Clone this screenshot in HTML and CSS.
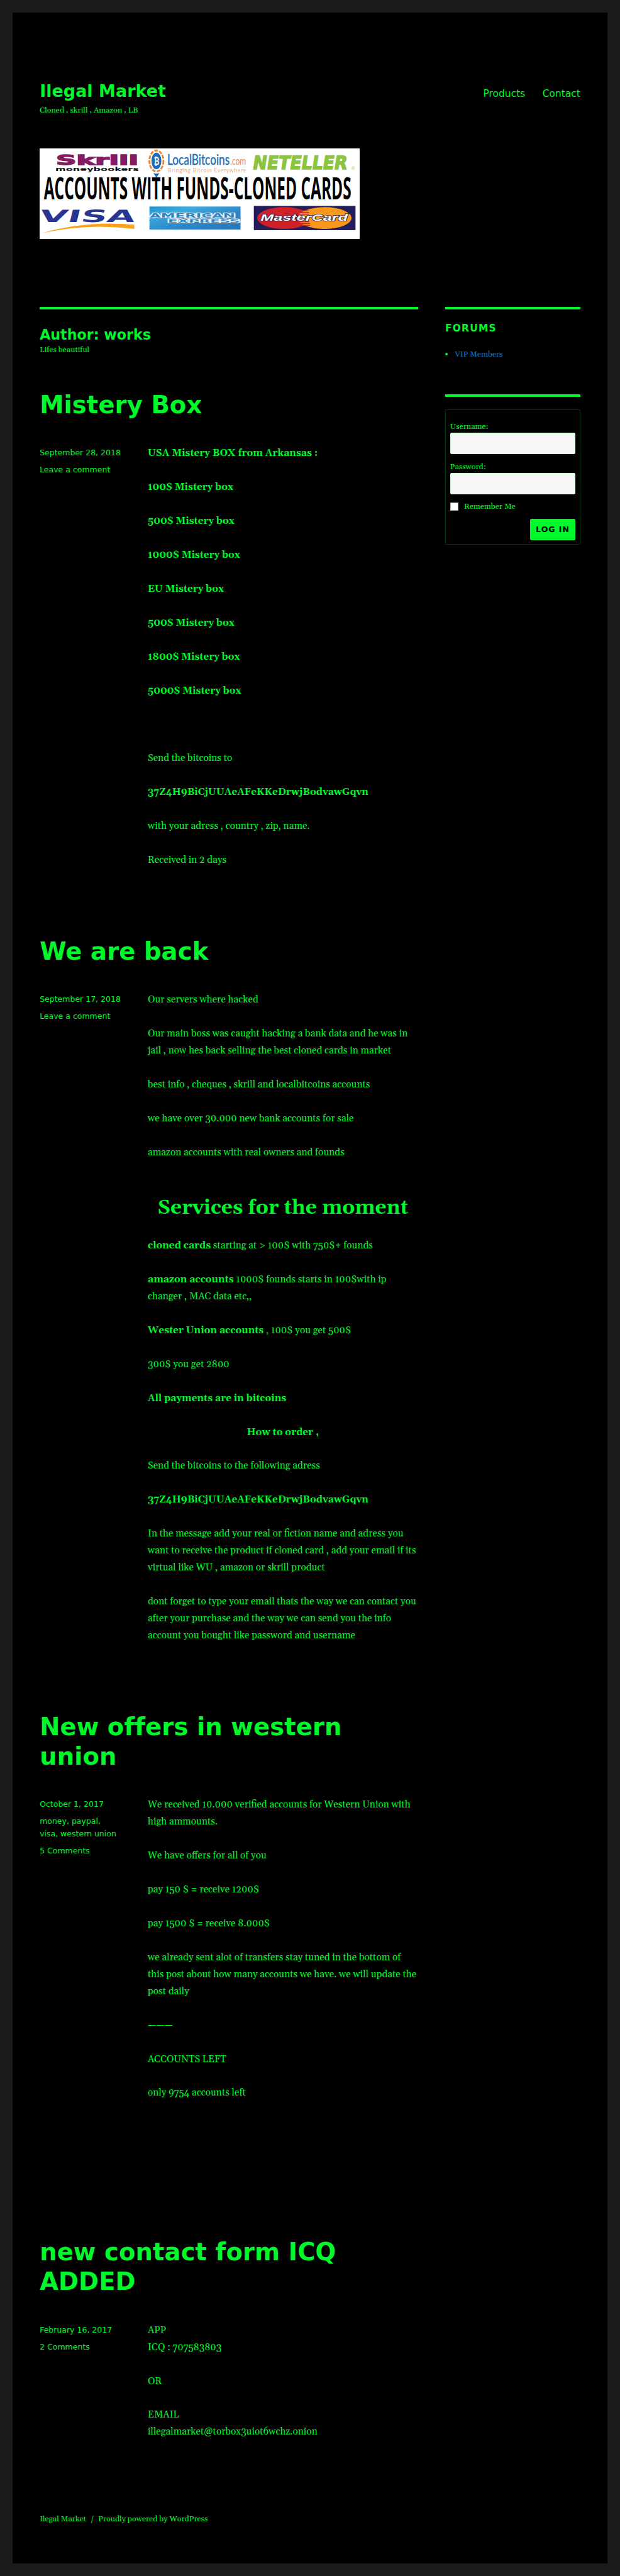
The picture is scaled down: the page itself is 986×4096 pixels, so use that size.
FILE: index.html
```html
<!DOCTYPE html>
<html lang="en">
<head>
<meta charset="utf-8">
<title>Author: works</title>
<link rel="stylesheet" href="styles.css">
</head>
<body>
<div class="site">
  <header class="site-header">
    <div class="header-main">
      <div class="branding">
        <p class="site-title">Ilegal Market</p>
        <p class="site-description">Cloned , skrill , Amazon , LB</p>
      </div>
      <nav class="main-nav"><a>Products</a><a>Contact</a></nav>
    </div>
    <svg class="banner" viewBox="0 0 529 150" width="529" height="150">
      <defs>
        <linearGradient id="amex" x1="0" y1="0" x2="1" y2="1">
          <stop offset="0" stop-color="#1d93cf"/><stop offset=".25" stop-color="#39abe2"/><stop offset=".6" stop-color="#2c86c8"/><stop offset="1" stop-color="#2b74b8"/>
        </linearGradient>
      </defs>
      <rect width="529" height="150" fill="#fff"/>
      <g class="b-sans" font-weight="bold">
        <text x="27" y="27.500" font-size="21.500" fill="#851b60" stroke="#851b60" stroke-width="1.400" textLength="136" lengthAdjust="spacingAndGlyphs">Skrill</text>
        <text x="26" y="37" font-size="8.500" fill="#111" textLength="138" lengthAdjust="spacingAndGlyphs">moneybookers</text>
      </g>
      <ellipse cx="193" cy="20.700" rx="11.600" ry="17.300" fill="none" stroke="#f08433" stroke-width="3" stroke-dasharray="6 2.1"/>
      <ellipse cx="193" cy="20.700" rx="8.200" ry="13.700" fill="#1f6db5"/>
      <text class="b-sans" x="188.800" y="27" font-size="17" font-weight="bold" fill="#fff" textLength="9" lengthAdjust="spacingAndGlyphs">₿</text>
      <g class="b-lato">
        <text x="211" y="27.500" font-size="24" fill="#2470b8" stroke="#2470b8" stroke-width=".5" textLength="103" lengthAdjust="spacingAndGlyphs">LocalBitcoins</text>
        <text x="315" y="27.500" font-size="17" fill="#f08433" textLength="26" lengthAdjust="spacingAndGlyphs">.com</text>
        <text x="212" y="39.500" font-size="9" fill="#f4a877" textLength="129">Bringing Bitcoin Everywhere</text>
      </g>
      <text class="b-sans" transform="translate(351 34.5) skewX(-9)" font-size="30.500" font-weight="bold" fill="#8bc53f" stroke="#8bc53f" stroke-width="1.600" textLength="156" lengthAdjust="spacingAndGlyphs">NETELLER</text>
      <text class="b-sans" x="514" y="35" font-size="8" fill="#a9d36f">®</text>
      <text class="b-open" x="7" y="83.700" font-size="50" font-weight="bold" fill="#000" textLength="508" lengthAdjust="spacingAndGlyphs">ACCOUNTS WITH FUNDS-CLONED CARDS</text>
      <path d="M188 40.500q5 2 10 0l-5 8z" fill="#1f6db5"/>
      <text class="b-sans" transform="translate(-2 121.3) skewX(-14)" font-size="28" font-weight="bold" fill="#283691" textLength="158" lengthAdjust="spacingAndGlyphs">VISA</text>
      <path d="M4 140Q75 119 156.500 126V133Q80 123 4 140Z" fill="#f8a31b"/>
      <rect x="181.500" y="96" width="150.500" height="38" fill="url(#amex)"/>
      <g class="b-sans" font-weight="bold" fill="#2f86c5" stroke="#e6f3fb" stroke-width="1.800" paint-order="stroke">
        <text x="182" y="114.500" font-size="8.500" textLength="141" lengthAdjust="spacingAndGlyphs">AMERICAN</text>
        <text x="212" y="122.500" font-size="8" textLength="119" lengthAdjust="spacingAndGlyphs">EXPRESS</text>
      </g>
      <rect x="354" y="95" width="168" height="40" fill="#221e5b"/>
      <ellipse cx="404" cy="115" rx="44.500" ry="18" fill="#d02128"/>
      <ellipse cx="471" cy="115" rx="44.500" ry="18" fill="#f7981d"/>
      <path d="M433 103h12M430 106h15M428 109h17M428 121h17M430 124h17M433 127h14" stroke="#d02128" stroke-width="1.500"/>
      <text class="b-liber" x="365" y="119.500" font-size="15" font-weight="bold" font-style="italic" fill="#fff" stroke="#2b1d4f" stroke-width="1.500" paint-order="stroke" textLength="144" lengthAdjust="spacingAndGlyphs">MasterCard</text>
    </svg>
  </header>

  <div class="site-content">
    <main class="content-area">
      <header class="page-header">
        <h1 class="page-title">Author: works</h1>
        <div class="page-tagline">Lifes beautiful</div>
      </header>

      <article class="post">
        <h2 class="entry-title">Mistery Box</h2>
        <div class="entry-body">
          <footer class="entry-meta"><span>September 28, 2018</span><span>Leave a comment</span></footer>
          <div class="entry-content">
            <p><strong>USA Mistery BOX from Arkansas :</strong></p>
            <p><strong>100$ Mistery box</strong></p>
            <p><strong>500$ Mistery box</strong></p>
            <p><strong>1000$ Mistery box</strong></p>
            <p><strong>EU Mistery box</strong></p>
            <p><strong>500$ Mistery box</strong></p>
            <p><strong>1800$ Mistery box</strong></p>
            <p><strong>5000$ Mistery box</strong></p>
            <p>&nbsp;</p>
            <p>Send the bitcoins to</p>
            <p><strong>37Z4H9BiCjUUAeAFeKKeDrwjBodvawGqvn</strong></p>
            <p>with your adress , country , zip, name.</p>
            <p>Received in 2 days</p>
          </div>
        </div>
      </article>

      <article class="post">
        <h2 class="entry-title">We are back</h2>
        <div class="entry-body">
          <footer class="entry-meta"><span>September 17, 2018</span><span>Leave a comment</span></footer>
          <div class="entry-content">
            <p>Our servers where hacked</p>
            <p>Our main boss was caught hacking a bank data and he was in<br>jail , now hes back selling the best cloned cards in market</p>
            <p>best info , cheques , skrill and localbitcoins accounts</p>
            <p>we have over 30.000 new bank accounts for sale</p>
            <p>amazon accounts with real owners and founds</p>
            <h1>Services for the moment</h1>
            <p><strong>cloned cards</strong> starting at &gt; 100$ with 750$+ founds</p>
            <p><strong>amazon accounts</strong> 1000$ founds starts in 100$with ip<br>changer , MAC data etc,,</p>
            <p><strong>Wester Union accounts</strong> , 100$ you get 500$</p>
            <p>300$ you get 2800</p>
            <p><strong>All payments are in bitcoins</strong></p>
            <p class="centered"><strong>How to order ,</strong></p>
            <p>Send the bitcoins to the following adress</p>
            <p><strong>37Z4H9BiCjUUAeAFeKKeDrwjBodvawGqvn</strong></p>
            <p>In the message add your real or fiction name and adress you<br>want to receive the product if cloned card , add your email if its<br>virtual like WU , amazon or skrill product</p>
            <p>dont forget to type your email thats the way we can contact you<br>after your purchase and the way we can send you the info<br>account you bought like password and username</p>
          </div>
        </div>
      </article>

      <article class="post">
        <h2 class="entry-title">New offers in western<br>union</h2>
        <div class="entry-body">
          <footer class="entry-meta"><span>October 1, 2017</span><span>money, paypal,<br>visa, western union</span><span>5 Comments</span></footer>
          <div class="entry-content">
            <p>We received 10.000 verified accounts for Western Union with<br>high ammounts.</p>
            <p>We have offers for all of you</p>
            <p>pay 150 $ = receive 1200$</p>
            <p>pay 1500 $ = receive 8.000$</p>
            <p>we already sent alot of transfers stay tuned in the bottom of<br>this post about how many accounts we have. we will update the<br>post daily</p>
            <p>———</p>
            <p>ACCOUNTS LEFT</p>
            <p>only 9754 accounts left</p>
            <p>&nbsp;</p>
            <p>&nbsp;</p>
          </div>
        </div>
      </article>

      <article class="post">
        <h2 class="entry-title">new contact form ICQ<br>ADDED</h2>
        <div class="entry-body">
          <footer class="entry-meta"><span>February 16, 2017</span><span>2 Comments</span></footer>
          <div class="entry-content">
            <p>APP<br>ICQ : 707583803</p>
            <p>OR</p>
            <p>EMAIL<br>illegalmarket@torbox3uiot6wchz.onion</p>
          </div>
        </div>
      </article>
    </main>

    <aside class="sidebar">
      <section class="widget">
        <h2 class="widget-title">Forums</h2>
        <ul class="forum-list"><li><a>VIP Members</a></li></ul>
      </section>
      <section class="widget">
        <form class="login">
          <label class="field">Username:<input type="text"></label>
          <label class="field">Password:<input type="password"></label>
          <label class="remember"><span class="check"></span>Remember Me</label>
          <button class="submit" type="button">Log In</button>
        </form>
      </section>
    </aside>
  </div>

  <footer class="site-footer"><span>Ilegal Market</span><span>/</span><span>Proudly powered by WordPress</span></footer>
</div>
</body>
</html>
```
FILE: styles.css
```css
* { box-sizing: border-box; margin: 0; padding: 0; }

body {
  background: #1a1a1a;
  color: #00f92a;
  font: 16px/28px Georgia, Gelasio, "Liberation Serif", serif;
}

.site {
  zoom: 0.9624;
  margin: 21px;
  height: 4214px;
  padding: 0 44.600px;
  background: #000;
}

.site-header { padding: 105px 0 112px; }
.header-main { display: flex; justify-content: space-between; height: 119px; }
.site-title { font: bold 28px/35px "DejaVu Sans", sans-serif; letter-spacing: 0.050px; margin-top: 7px; }
.site-description { font-size: 13px; line-height: 21px; margin-top: 3px; }
.main-nav { display: flex; gap: 28.500px; font: 16px/21px "DejaVu Sans", sans-serif; letter-spacing: 0.050px; padding-top: 18px; }
.banner { display: block; }
.b-sans { font-family: "DejaVu Sans", sans-serif; }
.b-lato { font-family: Lato, sans-serif; }
.b-open { font-family: "Open Sans", sans-serif; }
.b-liber { font-family: "Liberation Sans", sans-serif; }

.site-content { display: flex; justify-content: space-between; }
.content-area { width: 625px; }
.page-header { border-top: 4.200px solid #00f92a; padding-top: 28px; margin-bottom: 56px; }
.page-title { font: bold 23px/28px "DejaVu Sans", sans-serif; letter-spacing: 0.050px; }
.page-tagline { font-size: 13px; line-height: 21px; }

.post { margin-bottom: 83px; }
.entry-title { font: bold 40px/49px "DejaVu Sans", sans-serif; letter-spacing: 0.120px; margin-bottom: 43px; }
.entry-body { display: flex; justify-content: space-between; }
.entry-meta { display: flex; flex-direction: column; gap: 7px; width: 150px; padding-top: 2px; font: 13px/21px "DejaVu Sans", sans-serif; white-space: nowrap; }
.entry-content { width: 446.400px; white-space: nowrap; }
.entry-content p { margin-bottom: 28px; }
.entry-content h1 { font-size: 33px; line-height: 42px; margin: 56px 0 28px; text-align: center; }
.centered { text-align: center; }

.sidebar { width: 223.200px; font-size: 13px; line-height: 21px; }
.widget { border-top: 4.200px solid #00f92a; padding-top: 21px; margin-bottom: 56px; }
.widget-title { font: bold 16px/21px "DejaVu Sans", sans-serif; letter-spacing: 1.280px; text-transform: uppercase; margin-bottom: 21px; }
.forum-list { padding-left: 16px; }
.forum-list a { color: #007acc; }
.login { display: flex; flex-direction: column; height: 224px; padding: 17px 7px 0; border: 1.100px solid #00320a; }
.field { display: block; height: 66px; }
.field input { display: block; width: 100%; height: 35px; border: 1.100px solid #ccfed4; border-radius: 2px; background: #f7f7f7; }
.remember { display: flex; align-items: center; gap: 9px; height: 21px; }
.check { width: 14px; height: 14px; background: #fff; border: 1.100px solid #b5b5b5; }
.submit { align-self: flex-end; width: 75px; height: 35px; margin-top: 10px; border: 0; border-radius: 2px; background: #00f92a; color: #000; font: bold 13px/35px "DejaVu Sans", sans-serif; letter-spacing: 1.040px; text-transform: uppercase; white-space: nowrap; }

.site-footer { display: flex; gap: 7px; padding-top: 4px; font-size: 13px; line-height: 28px; }
```
